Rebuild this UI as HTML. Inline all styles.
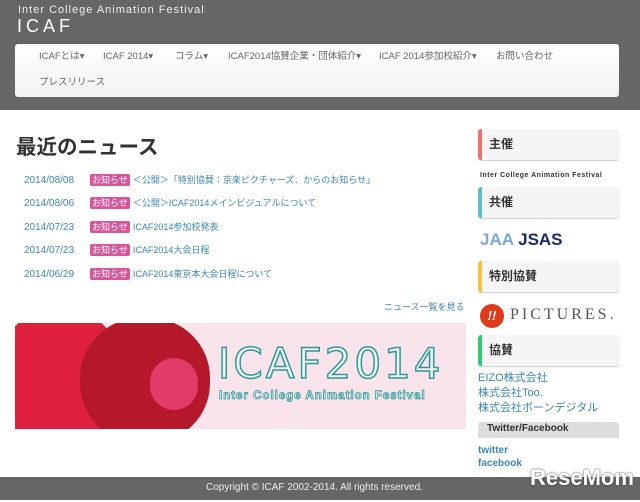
<!DOCTYPE html>
<html><head><meta charset="utf-8"><style>
*{margin:0;padding:0;box-sizing:border-box}
body{width:640px;height:502px;overflow:hidden;background:#fff;font-family:"Liberation Sans","Noto Sans CJK JP",sans-serif;position:relative}
.hdr{position:absolute;left:0;top:0;width:640px;height:110px;background:#666}
.t1{position:absolute;left:18px;top:4px;color:#eee;font-size:11px;letter-spacing:1px;line-height:13px}
.t2{position:absolute;left:17px;top:16px;color:#fff;font-size:18px;letter-spacing:4px;line-height:20px}
.nav{position:absolute;left:15px;top:44px;width:604px;height:53px;background:linear-gradient(#fff,#f2f2f2);border-radius:3px}
.nav span{position:absolute;font-size:9.5px;color:#666;white-space:nowrap;line-height:12px}
h1{position:absolute;left:16px;top:134px;font-size:20.5px;font-weight:bold;color:#333;line-height:28px}
.row{position:absolute;left:24px;font-size:9px;color:#3a87b5;white-space:nowrap;line-height:12px}
.row .d{display:inline-block;width:66px;font-size:10px}
.b{display:inline-block;background:#d9559a;color:#fff;padding:0 2px;border-radius:2px;margin-right:3px;line-height:12px}
.more{position:absolute;left:384px;top:300px;font-size:9px;color:#3a87b5}
.ban{position:absolute;left:15px;top:323px;width:451px;height:106px;background:#f8e4ea;overflow:hidden}
.foot{position:absolute;left:0;top:477px;width:640px;height:23px;background:#666;color:#eee;font-size:10px}
.side{position:absolute;left:478px;width:141px;height:31px;background:#f5f5f5;border-radius:3px;box-shadow:0 1px 1px #ccc;font-size:12px;font-weight:bold;color:#333;padding:7px 0 0 11px;line-height:16px}
.side:before{content:"";position:absolute;left:0;top:0;width:4px;height:100%;border-radius:3px 0 0 3px;background:var(--c)}
.lk{position:absolute;left:478px;font-size:11px;color:#3a87b5;line-height:14px}
</style></head><body>
<div class="hdr">
<div class="t1">Inter College Animation Festival</div>
<div class="t2">ICAF</div>
<div class="nav">
<span style="left:24px;top:7px">ICAFとは▾</span>
<span style="left:88px;top:7px">ICAF 2014▾</span>
<span style="left:160px;top:7px">コラム▾</span>
<span style="left:213px;top:7px">ICAF2014協賛企業・団体紹介▾</span>
<span style="left:364px;top:7px">ICAF 2014参加校紹介▾</span>
<span style="left:481px;top:7px">お問い合わせ</span>
<span style="left:24px;top:33px">プレスリリース</span>
</div></div>
<h1>最近のニュース</h1>
<div class="row" style="top:174px"><span class="d">2014/08/08</span><span class="b">お知らせ</span>＜公開＞「特別協賛：京楽ピクチャーズ．からのお知らせ」</div>
<div class="row" style="top:197px"><span class="d">2014/08/06</span><span class="b">お知らせ</span>＜公開＞ICAF2014メインビジュアルについて</div>
<div class="row" style="top:221px"><span class="d">2014/07/23</span><span class="b">お知らせ</span>ICAF2014参加校発表</div>
<div class="row" style="top:244px"><span class="d">2014/07/23</span><span class="b">お知らせ</span>ICAF2014大会日程</div>
<div class="row" style="top:268px"><span class="d">2014/06/29</span><span class="b">お知らせ</span>ICAF2014東京本大会日程について</div>
<div class="more">ニュース一覧を見る</div>
<div class="ban">
<div style="position:absolute;left:-10px;top:-10px;width:110px;height:130px;background:#e0203f;border-radius:40px"></div>
<div style="position:absolute;left:65px;top:-5px;width:130px;height:125px;background:#b5182a;border-radius:60px"></div>
<div style="position:absolute;left:135px;top:35px;width:48px;height:52px;background:#e33a6a;border-radius:25px"></div>
<div style="position:absolute;left:203px;top:18px;font-size:42px;line-height:46px;color:#f8f8f0;-webkit-text-stroke:1.5px #2a9a9a;letter-spacing:3px;font-family:'DejaVu Sans',sans-serif">ICAF2014</div>
<div style="position:absolute;left:204px;top:67px;font-size:11.5px;font-weight:bold;color:#f8f8f0;-webkit-text-stroke:.8px #2a9a9a;letter-spacing:1px">Inter College Animation Festival</div>
</div>
<div class="side" style="top:129px;--c:#f07070">主催</div>
<div style="position:absolute;left:480px;top:172px;font-size:7px;font-weight:bold;color:#333;letter-spacing:.5px">Inter College Animation Festival</div>
<div class="side" style="top:187px;--c:#5bc0c8">共催</div>
<div style="position:absolute;left:480px;top:230px;font-size:17px;font-weight:bold;color:#7aa8d8">JAA <span style="color:#1a2a6a">JSAS</span></div>
<div class="side" style="top:261px;--c:#f8c040">特別協賛</div>
<div style="position:absolute;left:480px;top:304px;width:24px;height:24px;border-radius:12px;background:#e03a1a;color:#fff;font-size:13px;font-weight:bold;text-align:center;line-height:24px;font-style:italic">!!</div>
<div style="position:absolute;left:510px;top:306px;font-family:'Liberation Serif',serif;font-size:16px;color:#555;letter-spacing:3px">PICTURES.</div>
<div class="side" style="top:335px;--c:#2ecc71">協賛</div>
<div class="lk" style="top:371px">EIZO株式会社</div>
<div class="lk" style="top:386px">株式会社Too.</div>
<div class="lk" style="top:401px">株式会社ボーンデジタル</div>
<div style="position:absolute;left:478px;top:422px;width:141px;height:16px;background:#ddd;border-radius:3px 3px 0 0;font-size:10px;font-weight:bold;color:#333;padding:1px 0 0 9px">Twitter/Facebook</div>
<div class="lk" style="top:444px;font-size:10px;font-weight:bold">twitter</div>
<div class="lk" style="top:457px;font-size:10px;font-weight:bold">facebook</div>
<div class="foot"><span style="position:absolute;left:206px;top:5px">Copyright © ICAF 2002-2014. All rights reserved.</span>
<span style="position:absolute;left:530px;top:-12px;font-size:22px;font-weight:bold;color:#fff;text-shadow:0 0 2px #333">ReseMom</span></div>
</body></html>
